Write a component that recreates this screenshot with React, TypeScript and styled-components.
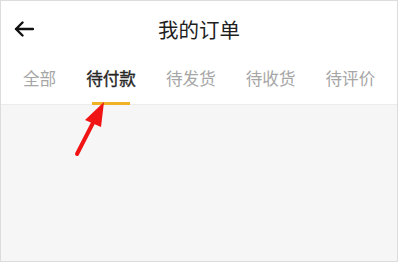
import React from 'react';
import styled, { createGlobalStyle } from 'styled-components';

const GlobalStyle = createGlobalStyle`
  html, body {
    margin: 0;
    padding: 0;
    background: #ffffff;
  }
  body {
    font-family: "Noto Sans CJK SC", "Noto Sans", sans-serif;
  }
`

const tabs = ['全部', '待付款', '待发货', '待收货', '待评价'];

const App: React.FC = () => {
  return (
    <>
      <GlobalStyle />
      <Frame>
        <Header>
          <TitleBar>
            <BackButton aria-label="back">
              <svg width="20" height="16" viewBox="0 0 20 16" fill="none">
                <path d="M19 8H2M8.5 1.5L2 8l6.5 6.5" stroke="#111" strokeWidth="2.4" strokeLinecap="round" strokeLinejoin="round" />
              </svg>
            </BackButton>
            <Title>我的订单</Title>
            <span />
          </TitleBar>
          <TabRow>
            {tabs.map((t, i) => (
              <Tab key={t} active={i === 1}>{t}</Tab>
            ))}
          </TabRow>
        </Header>
        <Body />
        <Pointer width="400" height="264" viewBox="0 0 400 264">
          <line x1="77" y1="154" x2="95" y2="119" stroke="#f01414" strokeWidth="4" strokeLinecap="round" />
          <polygon points="104,102 85,120 101,127" fill="#f01414" />
        </Pointer>
      </Frame>
    </>
  )
}

const Frame = styled.div`
  position: relative;
  width: 398px;
  height: 262px;
  box-sizing: border-box;
  border: 1px solid #dcdcdc;
  background: #f6f6f6;
  display: flex;
  flex-direction: column;
`

const Header = styled.div`
  background: #ffffff;
  display: flex;
  flex-direction: column;
`

const TitleBar = styled.div`
  height: 56px;
  display: grid;
  grid-template-columns: 60px 1fr 60px;
  align-items: center;
`

const BackButton = styled.div`
  display: flex;
  align-items: center;
  padding-left: 13px;
  height: 100%;
`

const Title = styled.div`
  text-align: center;
  font-size: 20.5px;
  color: #1e1e1e;
  line-height: 24px;
`

const TabRow = styled.div`
  height: 48px;
  box-sizing: border-box;
  display: flex;
  gap: 30px;
  padding: 0 0 0 22px;
  border-bottom: 1px solid #ececec;
`

const Tab = styled.div<{ active?: boolean }>`
  position: relative;
  font-size: 16.6px;
  line-height: 22px;
  padding-top: 10px;
  color: ${props => (props.active ? '#262626' : '#a6a6a6')};
  -webkit-text-stroke: ${props => (props.active ? '0.35px #262626' : '0')};

  &::after {
    content: '';
    display: ${props => (props.active ? 'block' : 'none')};
    position: absolute;
    left: 6px;
    right: 6px;
    bottom: -1px;
    height: 3px;
    background: #f0b124;
  }
`

const Body = styled.div`
  flex: 1;
  background: #f6f6f6;
`

const Pointer = styled.svg`
  position: absolute;
  left: -1px;
  top: -1px;
  pointer-events: none;
`

export default App
